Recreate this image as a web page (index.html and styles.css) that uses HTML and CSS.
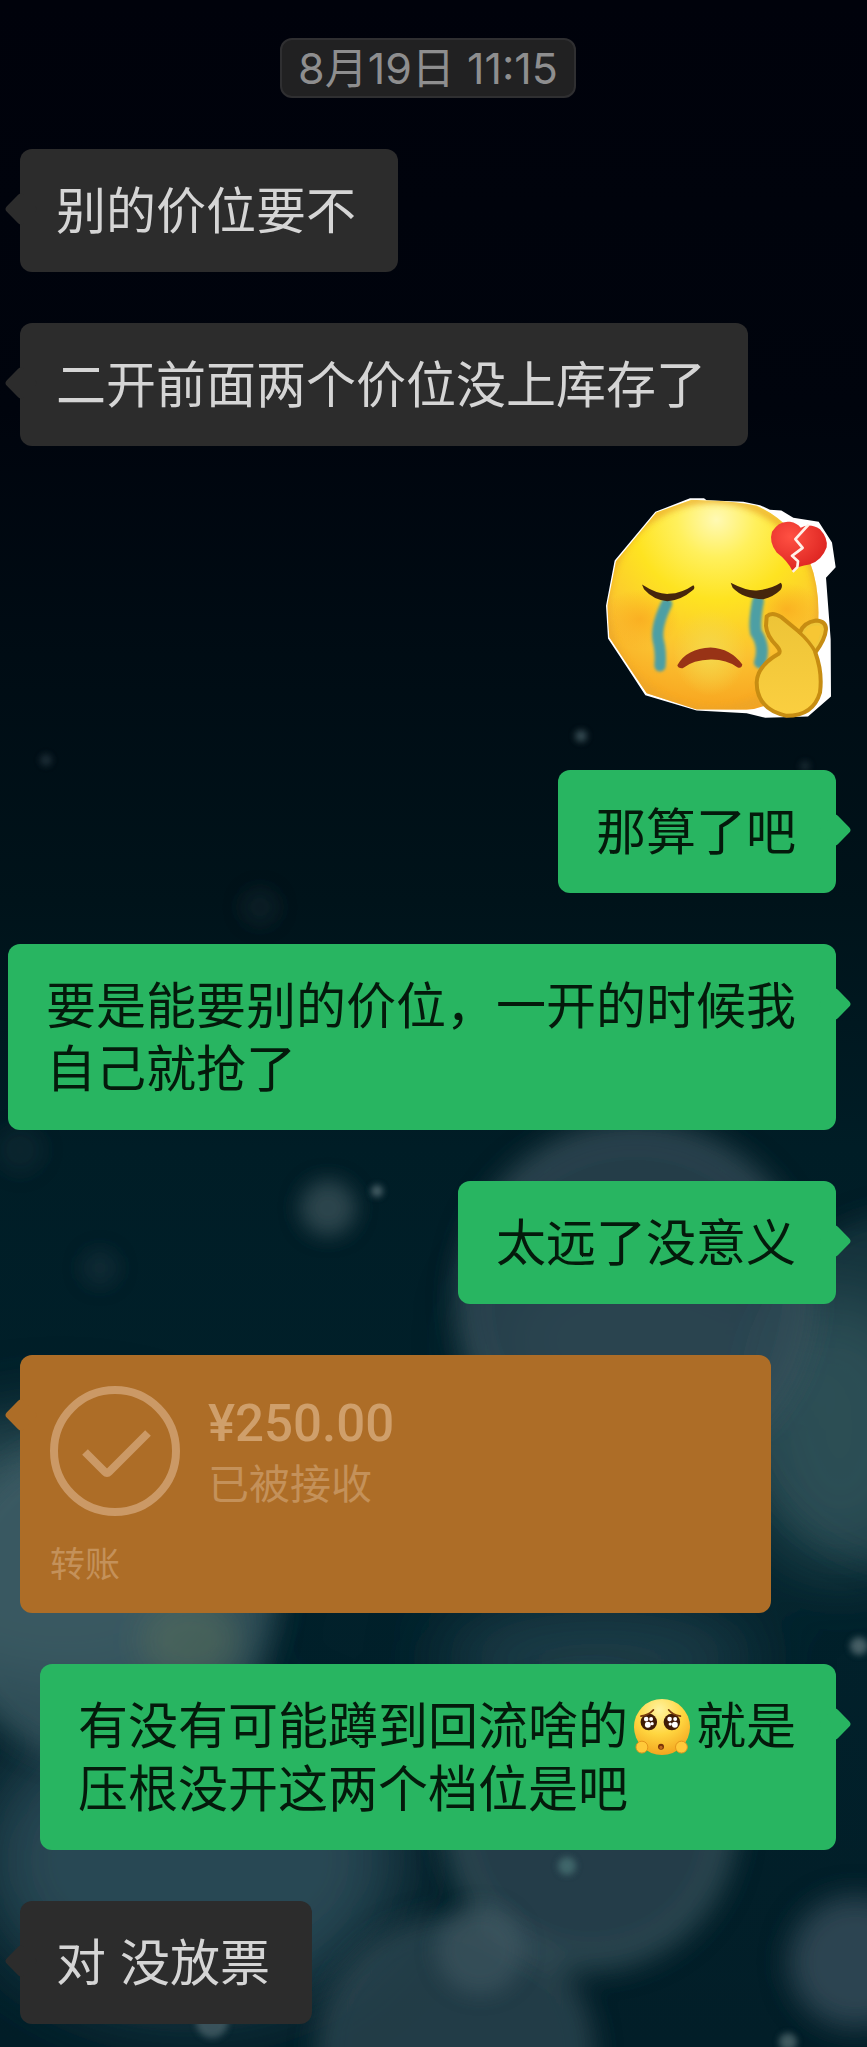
FILE: index.html
```html
<!DOCTYPE html>
<html lang="zh-CN">
<head>
    <meta charset="UTF-8">
    <meta name="viewport" content="width=device-width, initial-scale=1.0">
    <title>聊天记录</title>
    <link rel="stylesheet" href="styles.css">
</head>
<body>
    <main class="chat">
        <!-- Wallpaper: out-of-focus lights on dark water -->
        <svg class="wallpaper" viewBox="0 0 867 2047" preserveAspectRatio="xMidYMid slice" aria-hidden="true">
            <defs>
                <filter id="soft" x="-30%" y="-30%" width="160%" height="160%"><feGaussianBlur stdDeviation="14"/></filter>
                <filter id="haze" x="-60%" y="-60%" width="220%" height="220%"><feGaussianBlur stdDeviation="36"/></filter>
                <filter id="dot" x="-80%" y="-80%" width="260%" height="260%"><feGaussianBlur stdDeviation="3"/></filter>
                <filter id="blob" x="-80%" y="-80%" width="260%" height="260%"><feGaussianBlur stdDeviation="10"/></filter>
            </defs>
            <g filter="url(#haze)">
                <ellipse cx="60" cy="1560" rx="190" ry="140" fill="#3d5e66" opacity="0.8"/>
                <ellipse cx="190" cy="1860" rx="210" ry="150" fill="#2f4e5a" opacity="0.9"/>
                <ellipse cx="640" cy="1340" rx="150" ry="90" fill="#40606a" opacity="0.7"/>
                <ellipse cx="840" cy="1430" rx="100" ry="140" fill="#34595f" opacity="0.8"/>
                <ellipse cx="600" cy="1660" rx="160" ry="60" fill="#2a4a56" opacity="0.7"/>
            </g>
            <g filter="url(#soft)">
                <circle cx="635" cy="1300" r="168" fill="#2a4450" stroke="#3a525c" stroke-width="18" opacity="0.85"/>
                <circle cx="920" cy="1390" r="180" fill="#31515a" opacity="0.4"/>
                <circle cx="110" cy="1600" r="165" fill="#3e5d65" opacity="0.65"/>
                <circle cx="590" cy="1825" r="135" fill="#2a434f" stroke="#35525b" stroke-width="20" opacity="0.85"/>
                <circle cx="455" cy="2055" r="130" fill="#2f4753" stroke="#3a525c" stroke-width="14" opacity="0.75"/>
                <circle cx="855" cy="1962" r="66" fill="#304954" opacity="0.9"/>
                <ellipse cx="190" cy="1640" rx="50" ry="40" fill="#5a6f5c" opacity="0.5"/>
            </g>
            <g fill="#3b515a" filter="url(#blob)">
                <circle cx="328" cy="1208" r="28" opacity="0.75"/>
                <circle cx="480" cy="1950" r="44" fill="#4a626a" opacity="0.45"/>
                <circle cx="260" cy="907" r="18" opacity="0.2"/>
                <circle cx="100" cy="1268" r="18" opacity="0.25"/>
                <circle cx="20" cy="1150" r="24" opacity="0.15"/>
            </g>
            <g fill="#4d656c" filter="url(#dot)">
                <circle cx="377" cy="1191" r="6" opacity="0.9"/>
                <circle cx="567" cy="1866" r="9" fill="#41666a"/>
                <circle cx="581" cy="736" r="6" opacity="0.7"/>
                <circle cx="46" cy="760" r="6" opacity="0.35"/>
                <circle cx="805" cy="766" r="5" opacity="0.3"/>
                <circle cx="859" cy="1646" r="9" opacity="0.9"/>
                <circle cx="212" cy="2022" r="16" opacity="0.7"/>
                <circle cx="788" cy="2042" r="9" opacity="0.8"/>
            </g>
        </svg>

        <time class="timestamp" datetime="08-19T11:15">8月19日 11:15</time>

        <div class="bubble received">别的价位要不</div>

        <div class="bubble received">二开前面两个价位没上库存了</div>

        <svg class="sticker" viewBox="78 55 690 663" role="img" aria-label="大哭比心">
            <defs>
                <radialGradient id="face" cx="0.48" cy="0.1" r="0.95">
                    <stop offset="0" stop-color="#fff9b4"/>
                    <stop offset="0.18" stop-color="#fff05c"/>
                    <stop offset="0.38" stop-color="#fee321"/>
                    <stop offset="0.66" stop-color="#fbc231"/>
                    <stop offset="0.95" stop-color="#f79f1c"/>
                </radialGradient>
                <radialGradient id="chin" cx="0.5" cy="0.5" r="0.5">
                    <stop offset="0" stop-color="#f4d84c"/>
                    <stop offset="1" stop-color="#f4d84c" stop-opacity="0"/>
                </radialGradient>
                <radialGradient id="cheek" cx="0.5" cy="0.5" r="0.5">
                    <stop offset="0" stop-color="#f9a51e" stop-opacity="0.7"/>
                    <stop offset="1" stop-color="#f9a51e" stop-opacity="0"/>
                </radialGradient>
                <radialGradient id="heart" cx="0.35" cy="0.3" r="0.8">
                    <stop offset="0" stop-color="#ff5143"/>
                    <stop offset="1" stop-color="#d91f1d"/>
                </radialGradient>
                <linearGradient id="hand" x1="0" y1="0" x2="0" y2="1">
                    <stop offset="0" stop-color="#edc437"/>
                    <stop offset="1" stop-color="#fbcf40"/>
                </linearGradient>
                <filter id="smear" x="-20%" y="-20%" width="140%" height="140%"><feGaussianBlur stdDeviation="4"/></filter>
                <filter id="edge" x="-10%" y="-10%" width="120%" height="120%"><feGaussianBlur stdDeviation="9"/></filter>
                <clipPath id="faceClip">
                    <path d="M335 62L380 64Q470 66 530 80Q640 128 690 250Q714 310 716 400Q716 560 640 630Q560 690 500 692L350 691L200 642L146 562L88 474L82 380L108 246L229 100Z"/>
                </clipPath>
            </defs>
            <path fill="#fff" d="M330 57L372 57L380 63L490 68L540 78L570 92L604 94L640 116L716 128L756 190L767 264L738 296L752 480L753 652L684 712L556 716L500 702L350 694L196 648L142 566L84 478L78 380L104 244L226 98Z"/>
            <g clip-path="url(#faceClip)">
                <rect x="78" y="55" width="690" height="663" fill="url(#face)"/>
                <ellipse cx="390" cy="520" rx="110" ry="130" fill="url(#chin)"/>
                <ellipse cx="180" cy="420" rx="120" ry="90" fill="url(#cheek)"/>
                <ellipse cx="620" cy="390" rx="100" ry="80" fill="url(#cheek)"/>
                <ellipse cx="398" cy="378" rx="322" ry="318" fill="none" stroke="#e9a52c" stroke-width="22" opacity="0.8" filter="url(#edge)"/>
            </g>
            <g fill="none" stroke="#4d9fa4" stroke-linecap="round" stroke-linejoin="round" filter="url(#smear)">
                <path stroke-width="34" d="M260 374Q228 440 234 480Q244 520 240 560"/>
                <path stroke-width="36" d="M534 366Q522 430 528 460Q556 500 540 550"/>
            </g>
            <path fill="#46260c" d="M186 316Q232 346 266 344Q306 342 340 318Q346 324 340 332Q300 366 262 366Q220 362 192 330Z"/>
            <path fill="#46260c" d="M452 311Q500 336 530 334Q574 330 602 311Q610 318 602 332Q580 354 550 360Q490 360 458 326Z"/>
            <path fill="#983316" d="M292 558Q320 508 392 505Q452 508 487 556Q484 570 472 564Q438 540 392 541Q340 542 308 567Q294 568 292 558Z"/>
            <path fill="url(#hand)" stroke="#c78d12" stroke-width="12" stroke-linejoin="round" d="M560 412Q576 396 604 414L660 460Q670 430 708 424Q738 426 738 450Q736 480 706 520Q728 580 720 640Q700 710 620 710Q530 690 530 610Q532 560 596 524Q604 516 590 500Q560 470 558 440Z"/>
            <path fill="none" stroke="#c78d12" stroke-width="10" d="M656 458Q690 488 708 522"/>
            <path fill="#f7c634" d="M672 460Q690 434 720 440Q730 456 706 498Z"/>
            <path fill="url(#heart)" d="M638 276Q622 244 590 220Q566 190 576 158Q596 124 630 128Q652 132 662 146Q690 130 720 150Q744 176 740 204Q726 244 688 256Q654 260 638 276Z"/>
            <path fill="none" stroke="#fff0e8" stroke-width="8" stroke-linejoin="round" d="M686 136L646 180L668 206L636 230L654 246L652 264L638 278"/>
        </svg>

        <div class="bubble sent">那算了吧</div>

        <div class="bubble sent">要是能要别的价位，一开的时候我<br>自己就抢了</div>

        <div class="bubble sent">太远了没意义</div>

        <div class="bubble received transfer">
            <div class="transfer-main">
                <svg class="transfer-icon" viewBox="0 0 130 130" aria-hidden="true">
                    <circle cx="65" cy="65" r="61"/>
                    <path d="M35 66L55 86Q57 88 59 86L98 47"/>
                </svg>
                <div class="transfer-info">
                    <div class="amount">¥250.00</div>
                    <div class="status">已被接收</div>
                </div>
            </div>
            <div class="transfer-label">转账</div>
        </div>

        <div class="bubble sent">有没有可能蹲到回流啥的<svg class="emoji" viewBox="50 48 180 176" role="img" aria-label="可怜">
                <defs>
                    <radialGradient id="plead" cx="0.45" cy="0.2" r="0.85">
                        <stop offset="0" stop-color="#fff3a0"/>
                        <stop offset="0.5" stop-color="#ffd640"/>
                        <stop offset="1" stop-color="#f2a01c"/>
                    </radialGradient>
                </defs>
                <circle cx="140" cy="136" r="85" fill="url(#plead)"/>
                <g fill="#3f1c06">
                    <circle cx="100" cy="121" r="25"/>
                    <circle cx="170" cy="121" r="25"/>
                </g>
                <g fill="#fff">
                    <circle cx="92" cy="112" r="7"/>
                    <circle cx="107" cy="112" r="6"/>
                    <circle cx="97" cy="129" r="9"/>
                    <circle cx="110" cy="126" r="5"/>
                    <circle cx="163" cy="112" r="7"/>
                    <circle cx="180" cy="112" r="6"/>
                    <circle cx="179" cy="129" r="9"/>
                    <circle cx="165" cy="127" r="5"/>
                </g>
                <path d="M76 103Q100 100 114 84M160 84Q172 100 196 103" fill="none" stroke="#7b3d0c" stroke-width="5" stroke-linecap="round"/>
                <circle cx="137" cy="196" r="9" fill="#7a3208"/>
                <circle cx="137" cy="198" r="5" fill="#c26a1c"/>
                <g fill="#ffc93a" stroke="#e3951b" stroke-width="3">
                    <circle cx="79" cy="197" r="18"/>
                    <circle cx="199" cy="197" r="18"/>
                </g>
            </svg>就是<br>压根没开这两个档位是吧</div>

        <div class="bubble received">对 没放票</div>
    </main>
</body>
</html>
```
FILE: styles.css
```css
* {
    box-sizing: border-box;
}

body {
    margin: 0;
    background-color: #02222c;
    font-family: Inter, "Noto Sans CJK SC", sans-serif;
}

.chat {
    position: relative;
    z-index: 0;
    display: flex;
    flex-direction: column;
    align-items: flex-start;
    gap: 51px;
    min-height: 100vh;
    padding: 38px 31px 23px 20px;
    overflow: hidden;
    background: linear-gradient(#00020b, #00040d 20%, #000c14 32%, #00131a 44%, #001d26 56%, #01212b 75%, #021e28);
}

.wallpaper {
    position: absolute;
    inset: 0;
    z-index: -1;
    width: 100%;
    height: 100%;
}

.timestamp {
    align-self: center;
    padding: 0 16px;
    border: 2px solid #2f2f31;
    border-radius: 12px;
    background-color: #212122;
    color: #8e8e8f;
    font-size: 43px;
    line-height: 56px;
}

.bubble {
    position: relative;
    padding: 31px 42px 29px 36px;
    border-radius: 12px;
    font-size: 50px;
    line-height: 63px;
    white-space: nowrap;
}

/* speech tail */
.bubble::before {
    content: "";
    position: absolute;
    top: 48px;
    width: 24px;
    height: 24px;
    border-radius: 4px;
    background-color: inherit;
    transform: rotate(45deg);
}

.received {
    background-color: #2c2c2c;
    color: #d5d5d5;
}

.received::before {
    left: -11px;
}

.sent {
    align-self: flex-end;
    padding-right: 40px;
    padding-left: 38px;
    background-color: #28b561;
    color: #041a0b;
}

.sent::before {
    right: -11px;
}

.sticker {
    align-self: flex-end;
    width: 230px;
    height: 222px;
}

.emoji {
    width: 60px;
    height: 58px;
    margin: 0 4px;
    vertical-align: -12px;
}

.transfer {
    width: 92%;
    padding: 31px 30px 28px;
    background-color: #ad6d27;
    color: #c4915a;
}

.transfer-main {
    display: flex;
    align-items: center;
    gap: 28px;
    margin-bottom: 27px;
}

.transfer-icon {
    width: 130px;
    height: 130px;
    fill: none;
    stroke: #cb9966;
    stroke-width: 8;
}

.transfer-info {
    padding-top: 6px;
}

.amount {
    color: #cf9f6b;
    font-family: Roboto, sans-serif;
    font-size: 51px;
    font-weight: 500;
    line-height: 60px;
}

.status {
    font-size: 41px;
    line-height: 60px;
}

.transfer-label {
    font-size: 35px;
    line-height: 42px;
}
```
